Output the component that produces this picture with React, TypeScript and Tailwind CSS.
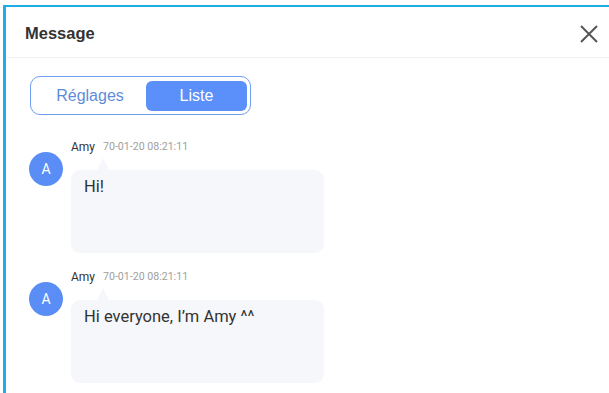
import React from "react";

const messages = [
  { name: "Amy", time: "70-01-20 08:21:11", text: "Hi!" },
  { name: "Amy", time: "70-01-20 08:21:11", text: "Hi everyone, I\u2019m Amy ^^" },
];

function Message({ name, time, text }: { name: string; time: string; text: string }) {
  return (
    <div className="flex items-start">
      <div className="mt-[12px] flex h-[34px] w-[34px] shrink-0 items-center justify-center rounded-full bg-[#5a8ef6] text-[14px] leading-none text-white">
        A
      </div>
      <div className="ml-[8px] flex flex-col">
        <div className="flex h-[14px] items-center">
          <span className="text-[12px] leading-none text-[#333]">{name}</span>
          <span className="ml-[8px] text-[10.6px] leading-none text-[#a0a0a0]">{time}</span>
        </div>
        <div className="relative mt-[16px] h-[83px] w-[253px] rounded-[9px] bg-[#f6f7fb] px-[13px] pt-[5px]">
          <div className="absolute left-[26px] top-[-12px] h-0 w-0 border-x-[6px] border-b-[12px] border-x-transparent border-b-[#f6f7fb]" />
          <span className="text-[16.5px] text-[#333]">{text}</span>
        </div>
      </div>
    </div>
  );
}

export default function App() {
  return (
    <div className="h-[393px] w-[609px] overflow-hidden bg-white pl-[3px] pt-[5px]" style={{ fontFamily: "Roboto, 'Noto Sans', sans-serif" }}>
      <div className="h-full border-l-[3px] border-t-[2px] border-[#1caee6] bg-white">
        <div className="flex h-[51px] items-center justify-between border-b border-[#f3f3f3] pl-[19px] pr-[10px]">
          <span className="pt-[2px] text-[16.5px] font-bold text-[#333]" style={{ fontFamily: "'Liberation Sans', Arial, sans-serif" }}>
            Message
          </span>
          <svg width="20" height="20" viewBox="0 0 20 20" className="mt-[4px]">
            <path d="M2 2 L18 18 M18 2 L2 18" stroke="#555" strokeWidth="2" strokeLinecap="butt" />
          </svg>
        </div>
        <div className="pl-[24px] pt-[18px]">
          <div
            className="flex h-[39px] w-[221px] items-center rounded-[10px] border-[1.5px] border-[#6e9ef2] p-[3px]"
            style={{ fontFamily: "'Liberation Sans', Arial, sans-serif" }}
          >
            <div className="flex flex-1 items-center justify-center text-[16px] text-[#5f8cd8]">Réglages</div>
            <div className="flex h-[30px] w-[101px] items-center justify-center rounded-[6px] bg-[#5b8ff9] text-[16px] text-white">
              Liste
            </div>
          </div>
        </div>
        <div className="flex flex-col gap-[17px] pl-[23px] pt-[25px]">
          {messages.map((m, i) => (
            <Message key={i} {...m} />
          ))}
        </div>
      </div>
    </div>
  );
}
